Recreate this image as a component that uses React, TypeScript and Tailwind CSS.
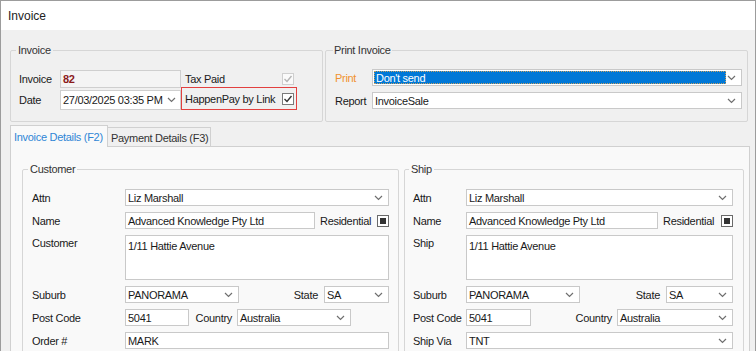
import React from 'react';

function Chevron() {
  return (
    <svg width="9" height="6" viewBox="0 0 9 6" className="flex-shrink-0">
      <polyline points="1,1 4.5,4.5 8,1" fill="none" stroke="#6f6f6f" strokeWidth="1.2" />
    </svg>
  );
}

function Check({ color }: { color: string }) {
  return (
    <svg width="10" height="10" viewBox="0 0 10 10">
      <polyline points="1.5,5 4,7.5 8.5,2" fill="none" stroke={color} strokeWidth="1.4" />
    </svg>
  );
}

function Input({ w, value, className = '' }: { w: string; value: string; className?: string }) {
  return (
    <div className={`${w} h-[17px] flex items-center border border-[#c9c9c9] bg-white pl-[2px] ${className}`}>
      {value}
    </div>
  );
}

function Select({ w, value }: { w: string; value: string }) {
  return (
    <div className={`${w} h-[17px] flex items-center justify-between border border-[#c9c9c9] bg-white pl-[2px] pr-[5px]`}>
      <span>{value}</span>
      <Chevron />
    </div>
  );
}

function Residential() {
  return (
    <div className="flex-1 flex items-center justify-between pl-[5px]">
      <span>Residential</span>
      <div className="w-[12px] h-[12px] border border-[#6a6a6a] bg-white flex items-center justify-center">
        <div className="w-[6px] h-[6px] bg-[#333]" />
      </div>
    </div>
  );
}

function Row({ label, lw, children }: { label: string; lw: string; children: React.ReactNode }) {
  return (
    <div className="flex items-center">
      <div className={`${lw} flex-shrink-0`}>{label}</div>
      {children}
    </div>
  );
}

function AddressGroup(props: {
  title: string;
  addrLabel: string;
  lw: string;
  fw: string;
  nameW: string;
  suburbW: string;
  stateW: string;
  postW: string;
  countryGap: string;
  countryW: string;
  last: React.ReactNode;
  className: string;
}) {
  return (
    <fieldset className={`border border-[#d6d6d6] rounded-[2px] pt-[13px] h-[200px] ${props.className}`}>
      <legend className="-ml-[4px] px-[2px] text-[#333]">{props.title}</legend>
      <div className={`flex flex-col gap-[6px] ${props.fw}`}>
        <Row label="Attn" lw={props.lw}>
          <Select w="flex-1" value="Liz Marshall" />
        </Row>
        <Row label="Name" lw={props.lw}>
          <Input w={props.nameW} value="Advanced Knowledge Pty Ltd" />
          <Residential />
        </Row>
        <div className="flex items-start">
          <div className={`${props.lw} flex-shrink-0 pt-[1px]`}>{props.addrLabel}</div>
          <div className="flex-1 h-[45px] border border-[#c9c9c9] bg-white pl-[2px] pt-[3px]">1/11 Hattie Avenue</div>
        </div>
        <Row label="Suburb" lw={props.lw}>
          <Select w={props.suburbW} value="PANORAMA" />
          <div className="flex-1 flex items-center justify-end gap-[6px]">
            <span>State</span>
            <Select w={props.stateW} value="SA" />
          </div>
        </Row>
        <Row label="Post Code" lw={props.lw}>
          <Input w={props.postW} value="5041" />
          <div className={`flex-1 flex items-center justify-end ${props.countryGap}`}>
            <span>Country</span>
            <Select w={props.countryW} value="Australia" />
          </div>
        </Row>
        {props.last}
      </div>
    </fieldset>
  );
}

export default function App() {
  return (
    <div className="w-[756px] h-[351px] overflow-hidden border-x border-t border-[#9c9c9c] bg-[#f0f0f0] font-['Liberation_Sans',sans-serif] text-[11px] leading-[14px] tracking-[-0.3px] text-[#1a1a1a]">
      <div className="h-[29px] bg-white pl-[7px] pt-[8px] text-[12px] tracking-normal text-[#222]">Invoice</div>

      <div className="pl-[9px] pt-[13px]">
        <div className="flex gap-[2px]">
          <fieldset className="w-[313px] h-[79px] border border-[#d6d6d6] rounded-[2px] pl-[8px] pt-[13px]">
            <legend className="-ml-[3px] px-[2px] text-[#333]">Invoice</legend>
            <div className="flex flex-col">
              <div className="flex items-center h-[18px]">
                <div className="w-[41px]">Invoice</div>
                <div className="w-[121px] h-[18px] flex items-center border border-[#cfcfcf] bg-[#f4f4f4] pl-[2px] font-bold text-[#8b1a1a]">82</div>
                <div className="w-[116px] flex items-center justify-between pl-[4px] pr-[3px]">
                  <span>Tax Paid</span>
                  <div className="w-[12px] h-[12px] border border-[#cfcfcf] bg-[#fafafa] flex items-center justify-center">
                    <Check color="#b5b5b5" />
                  </div>
                </div>
              </div>
              <div className="flex h-[23px] -mt-[1px]">
                <div className="w-[41px] h-[20px] self-end flex items-center">Date</div>
                <div className="w-[121px] h-[20px] self-end flex items-center justify-between border border-[#cfcfcf] bg-white pl-[2px] pr-[4px]">
                  <span>27/03/2025 03:35 PM</span>
                  <Chevron />
                </div>
                <div className="w-[116px] h-[23px] flex items-center justify-between border-[1.5px] border-[#e2403f] pl-[3px] pr-[2px]">
                  <span>HappenPay by Link</span>
                  <div className="w-[12px] h-[12px] border border-[#7a7a7a] bg-white flex items-center justify-center">
                    <Check color="#333" />
                  </div>
                </div>
              </div>
            </div>
          </fieldset>

          <fieldset className="w-[423px] h-[79px] border border-[#d6d6d6] rounded-[2px] pl-[9px] pt-[12px]">
            <legend className="-ml-[2px] px-[1px] text-[#333]">Print Invoice</legend>
            <div className="flex flex-col gap-[6px]">
              <div className="flex items-center">
                <div className="w-[37px] text-[#f0922e]">Print</div>
                <div className="w-[370px] h-[17px] flex items-center justify-between border border-[#c9c9c9] bg-white p-[1px] pr-[5px]">
                  <div className="w-[352px] h-[13px] flex items-center bg-[#0078d7] border border-dotted border-[#c8a060] pl-[1px] text-white">Don't send</div>
                  <Chevron />
                </div>
              </div>
              <div className="flex items-center">
                <div className="w-[37px]">Report</div>
                <Select w="w-[370px]" value="InvoiceSale" />
              </div>
            </div>
          </fieldset>
        </div>

        <div className="mt-[3px] flex items-end h-[21px]">
          <div className="relative z-10 w-[98px] h-[22px] -mb-[1px] border border-b-0 border-[#d0d0d0] bg-[#f9f9f9] pl-[3px] pt-[4px] text-[#2f86d6]">
            Invoice Details (F2)
          </div>
          <div className="w-[103px] h-[19px] border border-l-0 border-b-0 border-[#d0d0d0] bg-[#f0f0f0] pl-[3px] pt-[3px] text-[#333]">
            Payment Details (F3)
          </div>
        </div>

        <div className="w-[740px] h-[220px] border border-[#d0d0d0] bg-[#f9f9f9] pl-[11px] pt-[15px] flex gap-[5px]">
          <AddressGroup
            title="Customer"
            addrLabel="Customer"
            className="w-[377px] pl-[9px] pr-[9px]"
            lw="w-[93px]"
            fw="w-[357px]"
            nameW="w-[190px]"
            suburbW="w-[114px]"
            stateW="w-[65px]"
            postW="w-[64px]"
            countryGap="gap-[5px] pr-[38px]"
            countryW="w-[114px]"
            last={
              <Row label="Order #" lw="w-[93px]">
                <Input w="flex-1" value="MARK" />
              </Row>
            }
          />
          <AddressGroup
            title="Ship"
            addrLabel="Ship"
            className="w-[340px] pl-[8px] pr-[10px]"
            lw="w-[53px]"
            fw="w-[320px]"
            nameW="w-[192px]"
            suburbW="w-[114px]"
            stateW="w-[67px]"
            postW="w-[65px]"
            countryGap="gap-[5px]"
            countryW="w-[116px]"
            last={
              <Row label="Ship Via" lw="w-[53px]">
                <Select w="flex-1" value="TNT" />
              </Row>
            }
          />
        </div>
      </div>
    </div>
  );
}
